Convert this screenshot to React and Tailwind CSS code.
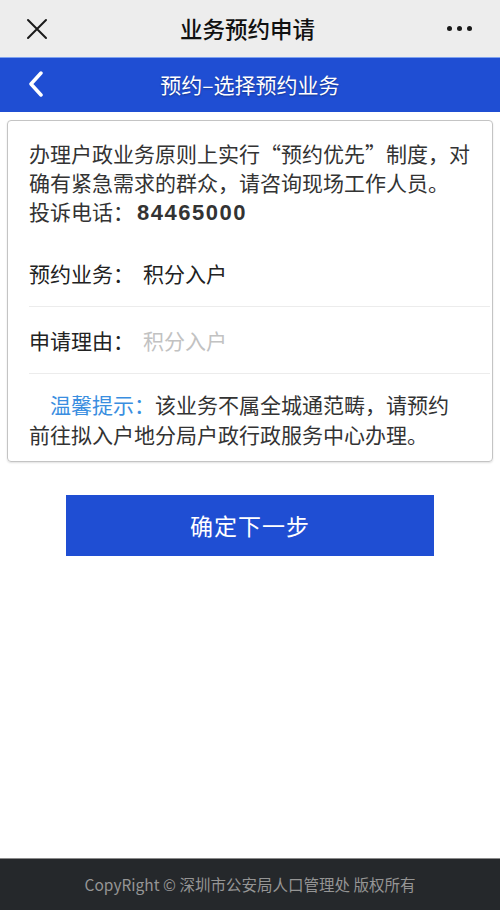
import React from "react";

const font = { fontFamily: '"Noto Sans CJK SC", "Noto Sans", sans-serif' };

const TopBar = () => (
  <div className="flex h-[57px] items-center justify-between bg-[#ededed] px-[26px]">
    <svg width="22" height="22" viewBox="0 0 22 22" className="text-[#1a1a1a]">
      <path d="M2 2L20 20M20 2L2 20" stroke="currentColor" strokeWidth="2" strokeLinecap="round" />
    </svg>
    <h1 className="text-[22.5px] font-medium text-[#111]">业务预约申请</h1>
    <div className="flex gap-[5px] pr-[2px]">
      <span className="h-[5px] w-[5px] rounded-full bg-[#1a1a1a]" />
      <span className="h-[5px] w-[5px] rounded-full bg-[#1a1a1a]" />
      <span className="h-[5px] w-[5px] rounded-full bg-[#1a1a1a]" />
    </div>
  </div>
);

const NavBar = () => (
  <div className="relative flex h-[55px] items-center justify-center border-t border-[#7ea2f0] bg-[#1f4ed3]">
    <svg
      width="16"
      height="26"
      viewBox="0 0 16 26"
      className="absolute left-[28px] top-[13px]"
    >
      <path d="M13 2L3 13L13 24" fill="none" stroke="white" strokeWidth="3.5" strokeLinecap="round" strokeLinejoin="round" />
    </svg>
    <h2 className="text-[21px] text-white [text-shadow:0_1px_2px_rgba(0,0,0,0.35)]">预约–选择预约业务</h2>
  </div>
);

const Row = ({ label, children }) => (
  <div className="flex h-[67px] items-center border-b border-[#ececec]">
    <span className="w-[114px] shrink-0 text-[#222]">{label}</span>
    {children}
  </div>
);

export default function App() {
  return (
    <div className="flex min-h-[910px] flex-col bg-white" style={font}>
      <TopBar />
      <NavBar />

      <main className="flex-1 px-[7px] pt-[8px]">
        <div className="rounded-[4px] border border-[#c4c4c4] pl-[21px] pt-[18px] pb-[12px] text-[21px] leading-[29px] shadow-[0_1px_2px_rgba(0,0,0,0.12)]">
          <p className="pr-[16px] text-[#333]">
            办理户政业务原则上实行“预约优先”制度，对确有紧急需求的群众，请咨询现场工作人员。
            <br />
            投诉电话：
            <span className="ml-[3px] text-[22px] font-bold tracking-[1.5px] text-[#333]" style={{ fontFamily: '"Liberation Sans", Arial, sans-serif' }}>
              84465000
            </span>
          </p>

          <div className="mt-[13px] mr-[2px]">
            <Row label="预约业务：">
              <span className="text-[#222]">积分入户</span>
            </Row>
            <Row label="申请理由：">
              <span className="text-[#c2c2c2]">积分入户</span>
            </Row>
          </div>

          <p className="indent-[21px] pt-[15px] pr-[30px] leading-[30px] text-[#333]">
            <span className="text-[#3a8ee0]">温馨提示：</span>
            该业务不属全城通范畴，请预约前往拟入户地分局户政行政服务中心办理。
          </p>
        </div>

        <div className="flex justify-center pt-[33px]">
          <button className="h-[61px] w-[368px] bg-[#1f4ed3] text-[23px] tracking-[1px] text-white">
            确定下一步
          </button>
        </div>
      </main>

      <footer className="flex h-[52px] items-center justify-center border-t border-[#8a8a8a] bg-[#25282b] text-[15.5px] text-[#959595]">
        CopyRight © 深圳市公安局人口管理处 版权所有
      </footer>
    </div>
  );
}
